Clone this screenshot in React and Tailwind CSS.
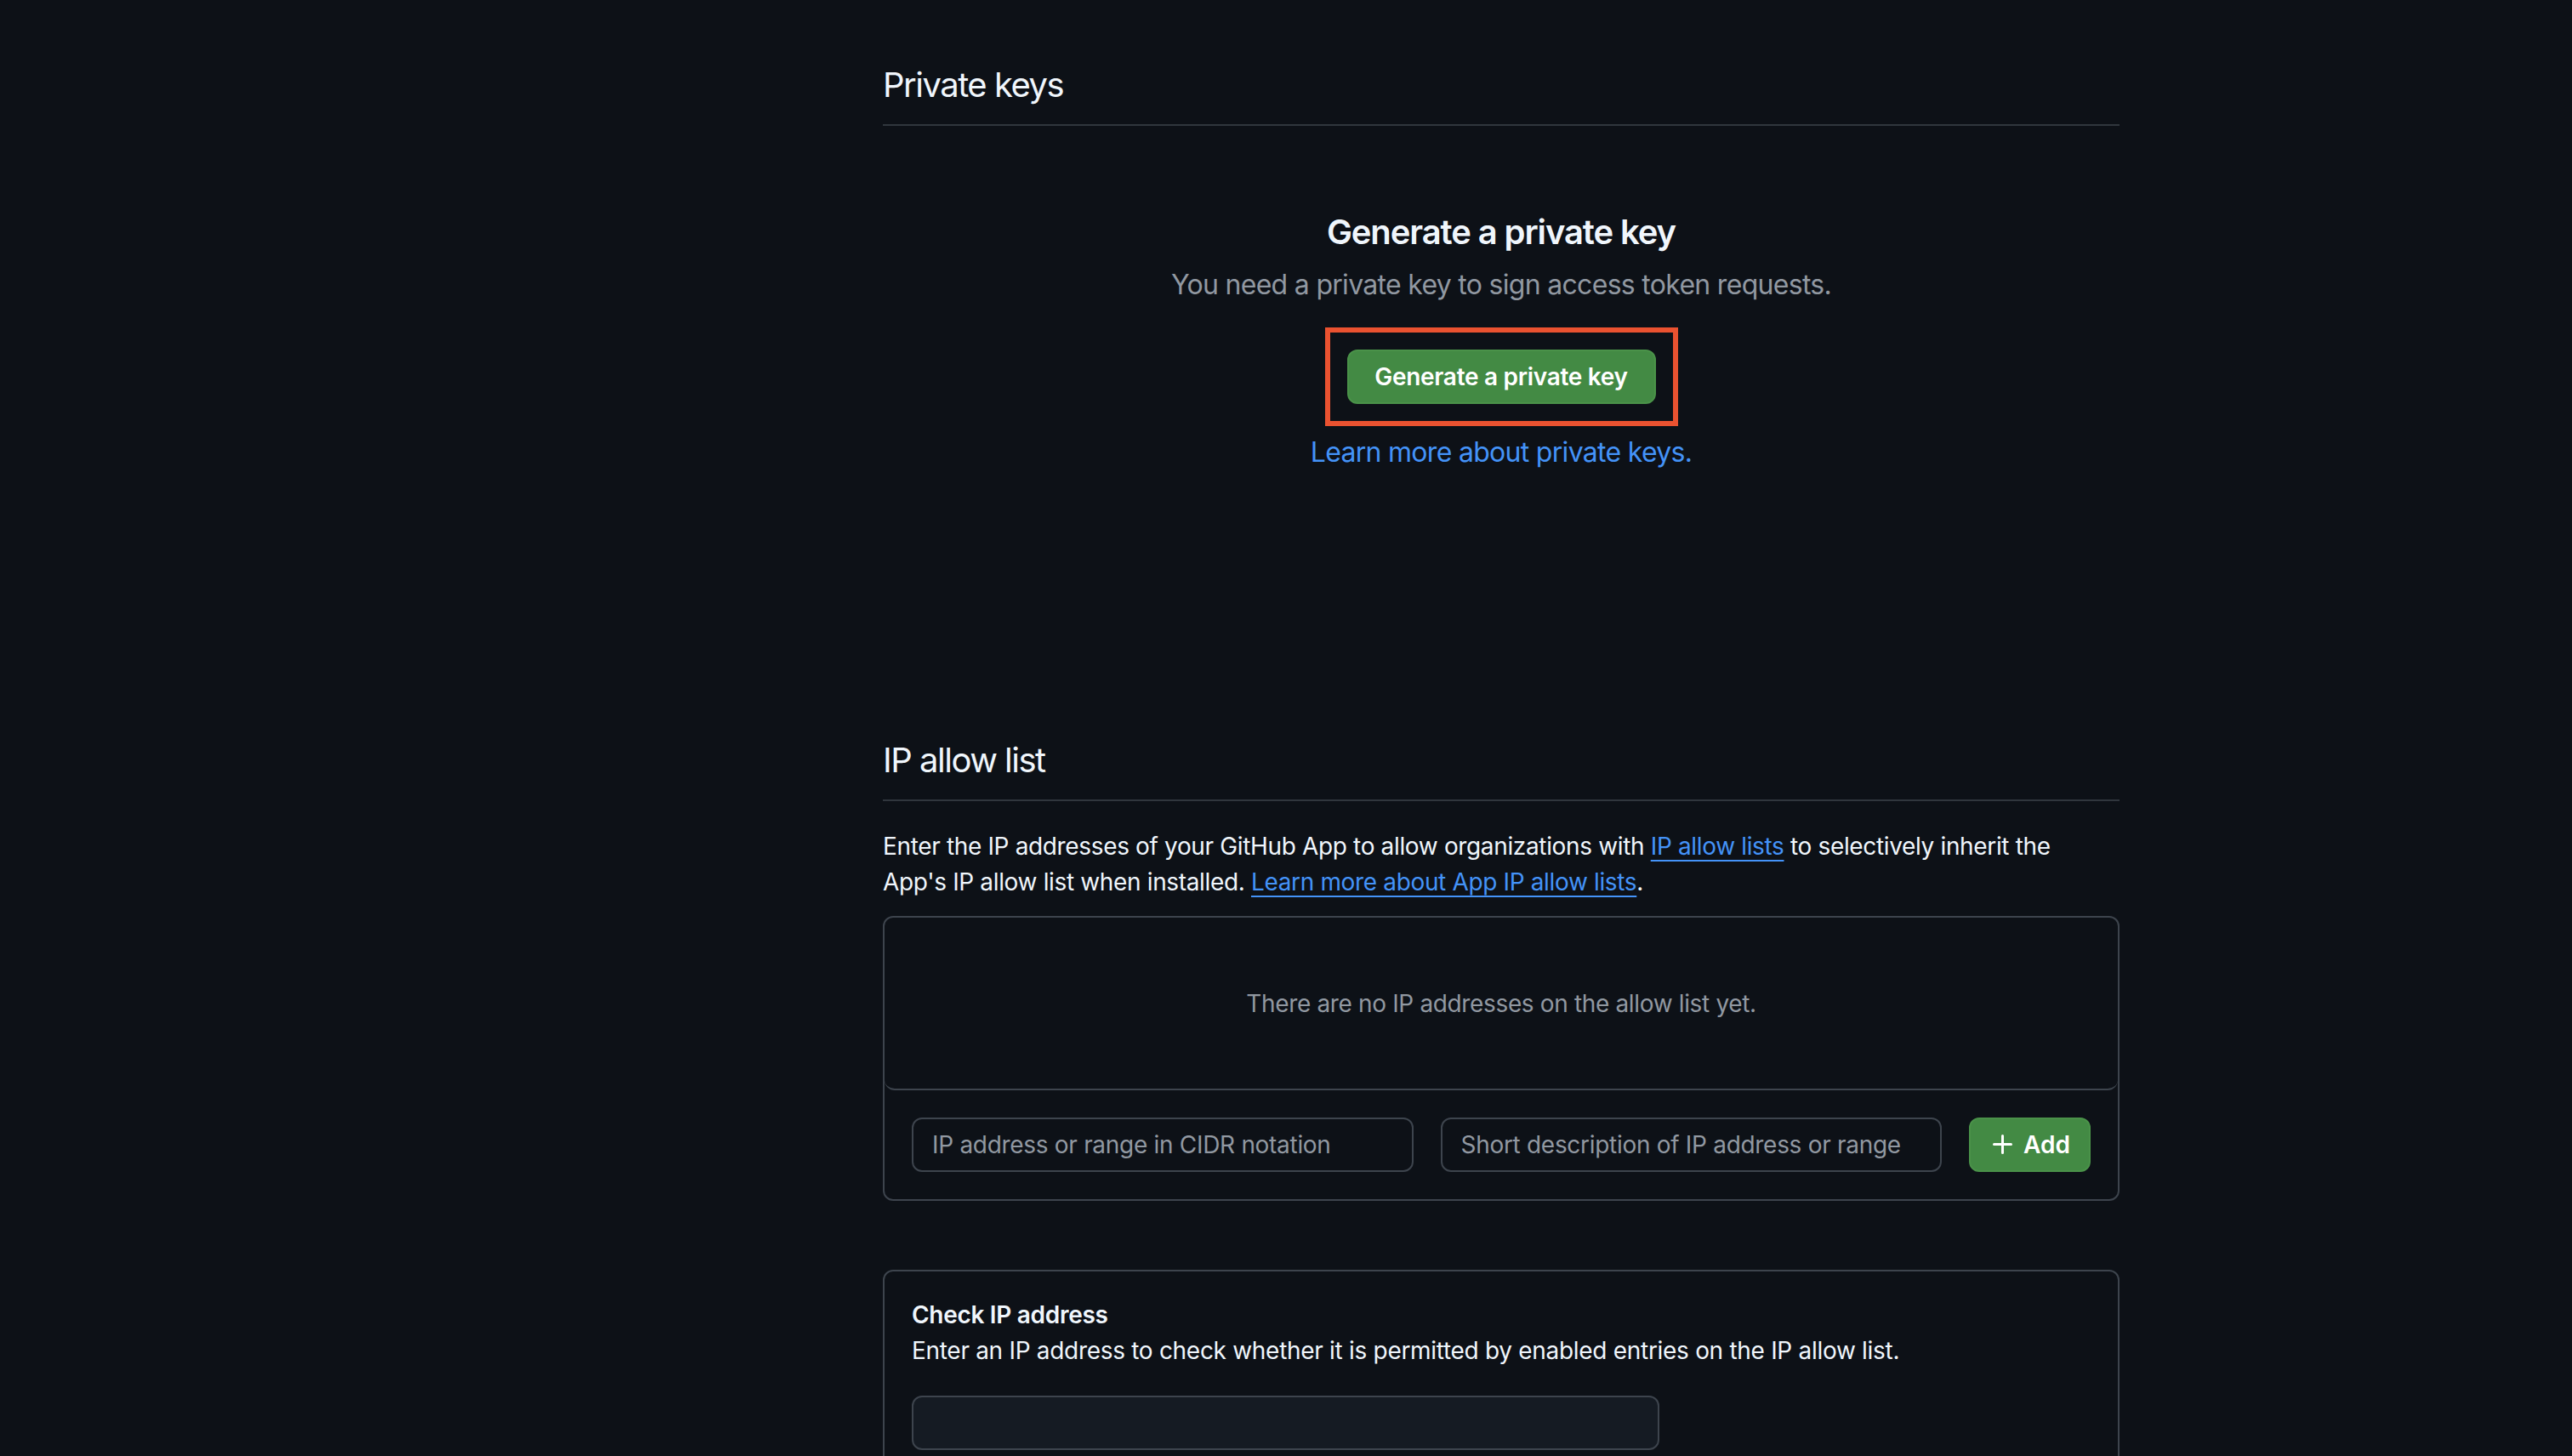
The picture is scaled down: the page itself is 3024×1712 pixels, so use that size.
import React from "react";

function PlusIcon() {
  return (
    <svg width="32" height="32" viewBox="0 0 16 16" fill="currentColor" aria-hidden="true">
      <path d="M7.75 2a.75.75 0 0 1 .75.75V7h4.25a.75.75 0 0 1 0 1.5H8.5v4.25a.75.75 0 0 1-1.5 0V8.5H2.75a.75.75 0 0 1 0-1.5H7V2.75A.75.75 0 0 1 7.75 2Z" />
    </svg>
  );
}

export default function App() {
  return (
    <div className="w-[3024px] h-[1712px] overflow-hidden bg-[#0d1117] text-[#f0f6fc] font-['Inter','Noto_Sans',sans-serif] antialiased">
      <div className="ml-[1038px] w-[1454px] pt-[70px]">
        {/* Private keys */}
        <h2 className="text-[40px] leading-[60px] font-normal pb-[16px] border-b-2 border-[#30363d] tracking-[-1.5px]">
          Private keys
        </h2>
        <div className="pt-[95px] flex flex-col items-center text-center">
          <h3 className="text-[40px] leading-[60px] font-semibold tracking-[-1.1px]">Generate a private key</h3>
          <p className="mt-[8px] text-[32px] leading-[48px] text-[#9198a1] tracking-[-0.7px]">
            You need a private key to sign access token requests.
          </p>
          <div className="mt-[26px] border-[6px] border-[#ea5230] p-[20px]">
            <button className="w-[363px] h-[64px] rounded-[12px] bg-[#438a44] border-2 border-[#4a9249] text-white text-[28px] font-semibold tracking-[-0.3px] flex items-center justify-center">
              Generate a private key
            </button>
          </div>
          <a className="mt-[7px] text-[32px] leading-[48px] text-[#4493f8] tracking-[-0.7px]">
            Learn more about private keys.
          </a>
        </div>

        {/* IP allow list */}
        <h2 className="mt-[308px] text-[40px] leading-[60px] font-normal pb-[16px] border-b-2 border-[#30363d] tracking-[-1.5px]">
          IP allow list
        </h2>
        <p className="mt-[32px] text-[28px] leading-[42px] tracking-[-0.35px]">
          Enter the IP addresses of your GitHub App to allow organizations with{" "}
          <a className="text-[#4493f8] underline decoration-2 underline-offset-[6px]">IP allow lists</a> to selectively inherit the
          <br />
          App's IP allow list when installed.{" "}
          <a className="text-[#4493f8] underline decoration-2 underline-offset-[6px]">Learn more about App IP allow lists</a>.
        </p>

        <div className="mt-[19px] border-2 border-[#3d444d] rounded-[12px]">
          <div className="h-[203px] flex items-center justify-center border-b-2 border-[#3d444d] rounded-b-[12px] text-[28px] leading-[42px] text-[#9198a1] tracking-[-0.35px]">
            There are no IP addresses on the allow list yet.
          </div>
          <div className="p-[32px] flex items-center gap-[32px]">
            <input
              className="flex-1 min-w-0 h-[64px] rounded-[12px] border-2 border-[#3d444d] bg-[#0d1117] px-[22px] text-[28px] text-[#f0f6fc] placeholder:text-[#9198a1] outline-none tracking-[-0.3px]"
              placeholder="IP address or range in CIDR notation"
            />
            <input
              className="flex-1 min-w-0 h-[64px] rounded-[12px] border-2 border-[#3d444d] bg-[#0d1117] px-[22px] text-[28px] text-[#f0f6fc] placeholder:text-[#9198a1] outline-none tracking-[-0.3px]"
              placeholder="Short description of IP address or range"
            />
            <button className="w-[143px] shrink-0 h-[64px] rounded-[12px] bg-[#438a44] border-2 border-[#4a9249] text-white text-[28px] font-semibold flex items-center justify-center gap-[8px]">
              <PlusIcon />
              <span>Add</span>
            </button>
          </div>
        </div>

        {/* Check IP address */}
        <div className="mt-[81px] border-2 border-[#3d444d] rounded-[12px] px-[32px] pt-[30px] pb-[32px]">
          <div className="text-[28px] leading-[42px] font-semibold tracking-[-0.3px]">Check IP address</div>
          <div className="text-[28px] leading-[42px] tracking-[-0.3px]">
            Enter an IP address to check whether it is permitted by enabled entries on the IP allow list.
          </div>
          <input className="mt-[32px] block w-[879px] h-[64px] rounded-[12px] border-2 border-[#3d444d] bg-[#151b23] px-[22px] text-[28px] outline-none" />
          <div className="h-[200px]" />
        </div>
      </div>
    </div>
  );
}
